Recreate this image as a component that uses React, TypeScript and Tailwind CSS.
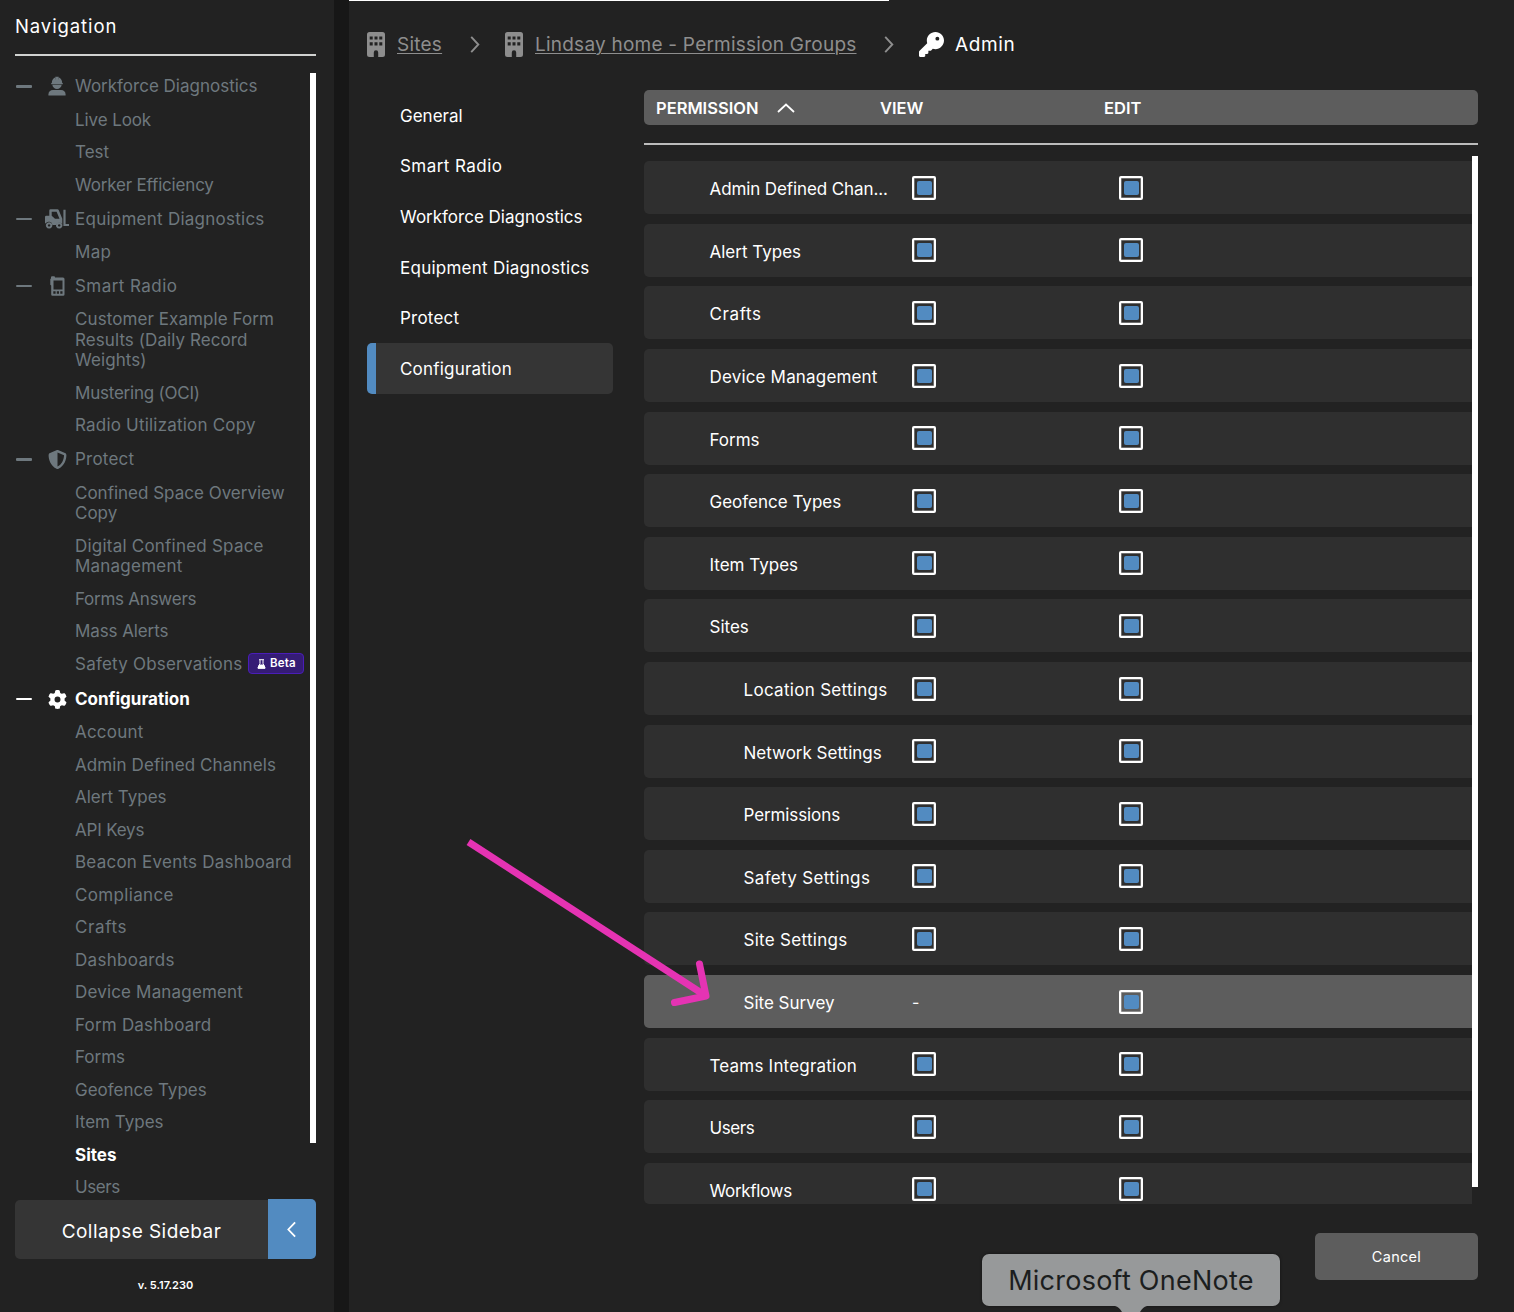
import { Fragment } from "react";
import clsx from "clsx";
import { FaGear, FaKey, FaShieldHalved } from "react-icons/fa6";

type NavItem = { label: string; beta?: boolean; active?: boolean };
type NavGroup = { label: string; icon: React.ReactNode; active?: boolean; items: NavItem[] };

const WorkerIcon = () => (
  <svg viewBox="0 0 18 20" className="h-[20px] w-[18px]" fill="currentColor">
    <path d="M3.800 7C3.800 4 5.300 2.200 7 1.500L7.300 4.300V.8h3.400v3.500L11 1.500C12.700 2.200 14.200 4 14.200 7h.6v1.300H3.200V7z" />
    <path d="M4.300 8.800h9.400c-.3 2.700-2.300 4.200-4.700 4.200s-4.400-1.500-4.700-4.200z" />
    <path d="M.4 19.600v-1.200c0-2.500 2-4.300 4.500-4.300h8.200c2.500 0 4.500 1.800 4.500 4.300v1.200z" />
  </svg>
);

const ForkliftIcon = () => (
  <svg viewBox="0 0 24 20" className="h-[20px] w-[24px]" fill="currentColor" fillRule="evenodd">
    <path d="M4.300 1.500Q4.300.3 5.500.3h7q.9 0 1.300.9l3.500 8.600v5.300a3.700 3.700 0 0 0-6.200.9H7.400a3.700 3.700 0 0 0-6.800-1.500L0 14V8q0-1.300 1.300-1.300h3zM6.700 2.700v4l3.300 3h4.500l-2.900-7z" />
    <path d="M4.100 13.200a3.200 3.200 0 1 0 .01 0zM4.100 15.200a1.200 1.200 0 1 1-.01 0zM14.200 13.200a3.200 3.200 0 1 0 .01 0zM14.200 15.200a1.200 1.200 0 1 1-.01 0z" />
    <path d="M18.400.8h2.200v14.300H24v2h-5.600z" />
  </svg>
);

const RadioIcon = () => (
  <svg viewBox="0 0 15 20" className="h-[20px] w-[15px]" fill="currentColor" fillRule="evenodd">
    <path d="M1 1.300Q1 .2 2 .2h2q1 0 1 1v.3h8q1.500 0 1.500 1.500v15.500q0 1.300-1.300 1.300H2.500q-1.300 0-1.300-1.300V9.500L.3 8.800V3L1 2.400zM3.500 4.500v9h9v-9zM3.300 15.200v2.600h2.300v-2.600zM6.800 15.200v2.600H9v-2.600zM10.300 15.200v2.600h2.200v-2.600z" />
  </svg>
);

const BuildingIcon = ({ className }: { className?: string }) => (
  <svg viewBox="0 0 18 25" className={clsx("h-[25px] w-[18px]", className)} fill="currentColor" fillRule="evenodd">
    <path d="M2.500 0h13Q18 0 18 2.500v20q0 2.500-2.500 2.500h-4.300v-4.500a2.200 2.200 0 0 0-4.400 0V25H2.500Q0 25 0 22.500v-20Q0 0 2.500 0zM2.700 4.400v3.200h3V4.400zM7.500 4.400v3.200h3V4.400zM12.300 4.400v3.200h3V4.400zM2.700 10.200v3.200h3v-3.200zM7.500 10.200v3.200h3v-3.200zM12.300 10.200v3.200h3v-3.200z" />
  </svg>
);

const FlaskIcon = () => (
  <svg viewBox="0 0 9 10" className="h-[10px] w-[9px]" fill="none" stroke="currentColor">
    <path d="M2 .7h5M3 1v3.500L1 8.800h7L6 4.500V1" />
    <path d="M2.300 6h4.400l1.300 3.300H1z" fill="currentColor" />
  </svg>
);

const navigation: NavGroup[] = [
  {
    label: "Workforce Diagnostics",
    icon: <WorkerIcon />,
    items: [{ label: "Live Look" }, { label: "Test" }, { label: "Worker Efficiency" }],
  },
  {
    label: "Equipment Diagnostics",
    icon: <ForkliftIcon />,
    items: [{ label: "Map" }],
  },
  {
    label: "Smart Radio",
    icon: <RadioIcon />,
    items: [
      { label: "Customer Example Form\nResults (Daily Record\nWeights)" },
      { label: "Mustering (OCI)" },
      { label: "Radio Utilization Copy" },
    ],
  },
  {
    label: "Protect",
    icon: <FaShieldHalved className="size-[19px]" />,
    items: [
      { label: "Confined Space Overview\nCopy" },
      { label: "Digital Confined Space\nManagement" },
      { label: "Forms Answers" },
      { label: "Mass Alerts" },
      { label: "Safety Observations", beta: true },
    ],
  },
  {
    label: "Configuration",
    icon: <FaGear className="size-[19px]" />,
    active: true,
    items: [
      { label: "Account" },
      { label: "Admin Defined Channels" },
      { label: "Alert Types" },
      { label: "API Keys" },
      { label: "Beacon Events Dashboard" },
      { label: "Compliance" },
      { label: "Crafts" },
      { label: "Dashboards" },
      { label: "Device Management" },
      { label: "Form Dashboard" },
      { label: "Forms" },
      { label: "Geofence Types" },
      { label: "Item Types" },
      { label: "Sites", active: true },
      { label: "Users" },
    ],
  },
];

const tabs = ["General", "Smart Radio", "Workforce Diagnostics", "Equipment Diagnostics", "Protect", "Configuration"];

const permissions = [
  { label: "Admin Defined Chan..." },
  { label: "Alert Types" },
  { label: "Crafts" },
  { label: "Device Management" },
  { label: "Forms" },
  { label: "Geofence Types" },
  { label: "Item Types" },
  { label: "Sites" },
  { label: "Location Settings", nested: true },
  { label: "Network Settings", nested: true },
  { label: "Permissions", nested: true },
  { label: "Safety Settings", nested: true },
  { label: "Site Settings", nested: true },
  { label: "Site Survey", nested: true, hovered: true, noView: true },
  { label: "Teams Integration" },
  { label: "Users" },
  { label: "Workflows" },
];

const tracking: Record<string, string> = {
  "Live Look": "tracking-[-0.1px]",
  "Worker Efficiency": "tracking-[-0.18px]",
  "Equipment Diagnostics": "tracking-[0.25px]",
  "Smart Radio": "tracking-[0.45px]",
  Map: "tracking-[0.3px]",
  "Customer Example Form\nResults (Daily Record\nWeights)": "tracking-[0.08px]",
  "Mustering (OCI)": "tracking-[-0.22px]",
  "Radio Utilization Copy": "tracking-[0.2px]",
  Protect: "tracking-[0.22px]",
  "Digital Confined Space\nManagement": "tracking-[0.22px]",
  "Forms Answers": "tracking-[-0.25px]",
  "Mass Alerts": "tracking-[-0.1px]",
  "Safety Observations": "tracking-[0.22px]",
  Account: "tracking-[0.2px]",
  "Admin Defined Channels": "tracking-[0.1px]",
  "Admin Defined Chan...": "tracking-[-0.1px]",
  "API Keys": "tracking-[-0.2px]",
  "Beacon Events Dashboard": "tracking-[0.23px]",
  Compliance: "tracking-[0.33px]",
  Crafts: "tracking-[0.6px]",
  Dashboards: "tracking-[0.3px]",
  "Device Management": "tracking-[0.17px]",
  "Form Dashboard": "tracking-[0.2px]",
  Users: "tracking-[-0.4px]",
  "Location Settings": "tracking-[0.3px]",
  Permissions: "tracking-[-0.1px]",
  "Safety Settings": "tracking-[0.35px]",
  "Site Settings": "tracking-[0.3px]",
  "Teams Integration": "tracking-[0.2px]",
  Workflows: "tracking-[-0.33px]",
};

function Chevron({ className }: { className?: string }) {
  return (
    <svg viewBox="0 0 10 18" className={className} fill="none" stroke="currentColor" strokeWidth="2">
      <path d="M1 1l7.500 8L1 17" />
    </svg>
  );
}

function Checkbox() {
  return (
    <span className="flex size-6 rounded-[2px] border-2 border-white pl-[3px] pt-[3px] shadow-[inset_0_0_0_0.5px_rgba(255,255,255,0.6)]">
      <span className="h-[14px] w-[15px] rounded-[2px] bg-[#528bc1]" />
    </span>
  );
}

function Sidebar() {
  return (
    <aside className="flex h-full w-[334px] shrink-0 flex-col bg-[#222222] pl-[15px] pr-[18px]">
      <h2 className="h-[54px] pt-[14px] text-[18.500px] leading-[25px] tracking-[0.9px] text-white">Navigation</h2>
      <div className="h-[2px] shrink-0 bg-[#d0d2d0]" />
      <div className="mt-[12px] flex h-[1131px] shrink-0 overflow-hidden">
        <nav className="flex-1 pt-[1.1px] text-[17px] leading-[20.5px] text-[#6e787e]">
          {navigation.map((group) => (
            <Fragment key={group.label}>
              <div
                className={clsx(
                  "flex h-[34.8px] items-center whitespace-nowrap",
                  group.active && "font-bold text-white",
                  tracking[group.label]
                )}
              >
                <span className="ml-px h-[2.500px] w-[16px] rounded-[1px] bg-current" />
                <span className="ml-[10px] flex w-[30px] justify-center">{group.icon}</span>
                <span className="ml-[3px]">{group.label}</span>
              </div>
              {group.items.map((item) => (
                <div
                  key={item.label}
                  className={clsx(
                    "flex items-center whitespace-pre pl-[60px]",
                    item.beta ? "h-[33.9px]" : "py-[6px]",
                    item.active && "font-bold text-white",
                    tracking[item.label]
                  )}
                >
                  {item.label}
                  {item.beta && (
                    <span className="-mt-[2px] ml-[6px] flex h-[21px] w-[56px] items-center justify-center gap-[4px] rounded-[4px] border border-[#4a1db8] bg-[#351c75] text-[11.500px] font-semibold text-white">
                      <FlaskIcon />
                      Beta
                    </span>
                  )}
                </div>
              ))}
            </Fragment>
          ))}
        </nav>
        <div className="-ml-[6px] mt-[5px] h-[1070px] w-[6px] bg-white" />
      </div>
      <button className="flex h-[60px] shrink-0 items-end text-white">
        <span className="flex h-[59px] flex-1 items-center justify-center rounded-l-[5px] bg-[#353535] pt-[6px] text-[19px] tracking-[0.45px]">
          Collapse Sidebar
        </span>
        <span className="flex h-[60px] w-[48px] items-center justify-center rounded-r-[5px] bg-[#528bc1] pr-[2px]">
          <Chevron className="h-[17px] w-[9px] rotate-180" />
        </span>
      </button>
      <p className="mt-[19px] text-center text-[11px] font-semibold leading-[14px] text-white">v. 5.17.230</p>
    </aside>
  );
}

function Breadcrumbs() {
  return (
    <div className="flex h-[87px] items-center pl-[18px] text-[19px] tracking-[0.23px] text-[#8e8e8e]">
      <BuildingIcon />
      <span className="ml-[12px] w-[45px] whitespace-nowrap pt-[2px] underline decoration-1 underline-offset-2">
        Sites
      </span>
      <Chevron className="ml-[28px] h-[17px] w-[10px]" />
      <BuildingIcon className="ml-[25px]" />
      <span className="ml-[12px] w-[322px] whitespace-nowrap pt-[2px] underline decoration-1 underline-offset-2">
        Lindsay home - Permission Groups
      </span>
      <Chevron className="ml-[27px] h-[17px] w-[10px]" />
      <FaKey className="ml-[25px] size-[25px] text-white" />
      <span className="ml-[11px] pt-[2px] tracking-[0.6px] text-white">Admin</span>
    </div>
  );
}

function PermissionTable() {
  return (
    <div className="flex w-[834px] flex-col text-white">
      <div className="flex h-[35px] items-center rounded-[5px] bg-[#5d5d5d] pl-[12px] text-[16.500px] font-semibold">
        <div className="flex w-[224px] items-center">
          <span className="w-[104px] pt-[2px]">PERMISSION</span>
          <svg viewBox="0 0 18 10" className="ml-[17px] h-[10px] w-[18px]" fill="none" stroke="white" strokeWidth="1.800">
            <path d="M1 9l8-7.500L17 9" />
          </svg>
        </div>
        <span className="w-[224px] pt-[2px]">VIEW</span>
        <span className="pt-[2px]">EDIT</span>
      </div>
      <div className="mt-[18px] h-[2px] bg-[#bcbcbc]" />
      <div className="mt-[11px] flex h-[1048px] overflow-hidden rounded-bl-[5px]">
        <div className="flex flex-1 flex-col gap-[9.600px] pt-[5.300px]">
          {permissions.map((row) => (
            <div
              key={row.label}
              className={clsx(
                "flex h-[53px] shrink-0 items-center rounded-l-[5px]",
                row.hovered ? "bg-[#5d5d5d]" : "bg-[#2f2f2f]"
              )}
            >
              <span
                className={clsx(
                  "w-[268px] whitespace-nowrap pt-[4.500px] text-[17px]",
                  row.nested ? "pl-[99.500px]" : "pl-[65.500px]",
                  tracking[row.label]
                )}
              >
                {row.label}
              </span>
              <span className="w-[207px]">{row.noView ? "-" : <Checkbox />}</span>
              <Checkbox />
            </div>
          ))}
        </div>
        <div className="h-[1031px] w-[6px] bg-white" />
      </div>
    </div>
  );
}

export default function App() {
  return (
    <div className="relative flex h-[1312px] w-[1514px] overflow-hidden bg-[#171717] font-['Inter',sans-serif]">
      <Sidebar />
      <main className="ml-[15px] flex flex-1 flex-col bg-[#222222]">
        <div className="h-px w-[540px] shrink-0 bg-white" />
        <Breadcrumbs />
        <div className="mt-[2px] flex">
          <div className="flex w-[295px] flex-col pl-[18px] text-[17px] text-white">
            {tabs.map((tab) => (
              <div
                key={tab}
                className={clsx(
                  "flex h-[50.600px] w-[246px] items-center rounded-[5px] pl-[33px] pt-[2.500px]",
                  tab === "Configuration" && "bg-[linear-gradient(to_right,#528bc1_9px,#353535_9px)] tracking-[0.2px]",
                  tracking[tab]
                )}
              >
                {tab}
              </div>
            ))}
          </div>
          <PermissionTable />
        </div>
        <button className="ml-[966px] mt-[29px] h-[47px] w-[163px] shrink-0 rounded-[5px] bg-[#5d5d5d] text-[14.500px] tracking-[0.3px] text-white">
          Cancel
        </button>
      </main>

      {/* Annotation arrow */}
      <svg className="absolute left-[460px] top-[830px] h-[190px] w-[260px]" fill="none" stroke="#e533b3" strokeWidth="7">
        <path d="M8.500 12L246 166" />
        <path d="M239.500 134L246 166L214.500 172.500" strokeLinecap="round" strokeLinejoin="round" />
      </svg>

      {/* Dock tooltip */}
      <div className="absolute left-[982px] top-[1254px] flex h-[52px] w-[298px] items-center justify-center rounded-[7px] bg-[#97999a] pt-[2px] text-[27px] tracking-[0.25px] text-[#1c1e1e] shadow-[0_0_3px_rgba(0,0,0,0.5)]">
        Microsoft OneNote
        <svg viewBox="0 0 32 6" className="absolute left-[133px] top-[52px] h-[6px] w-[32px]" fill="#97999a">
          <path d="M0 0h32c-3 .5-5 3-7 6H7C5 3 3 .5 0 0z" />
        </svg>
      </div>
    </div>
  );
}
